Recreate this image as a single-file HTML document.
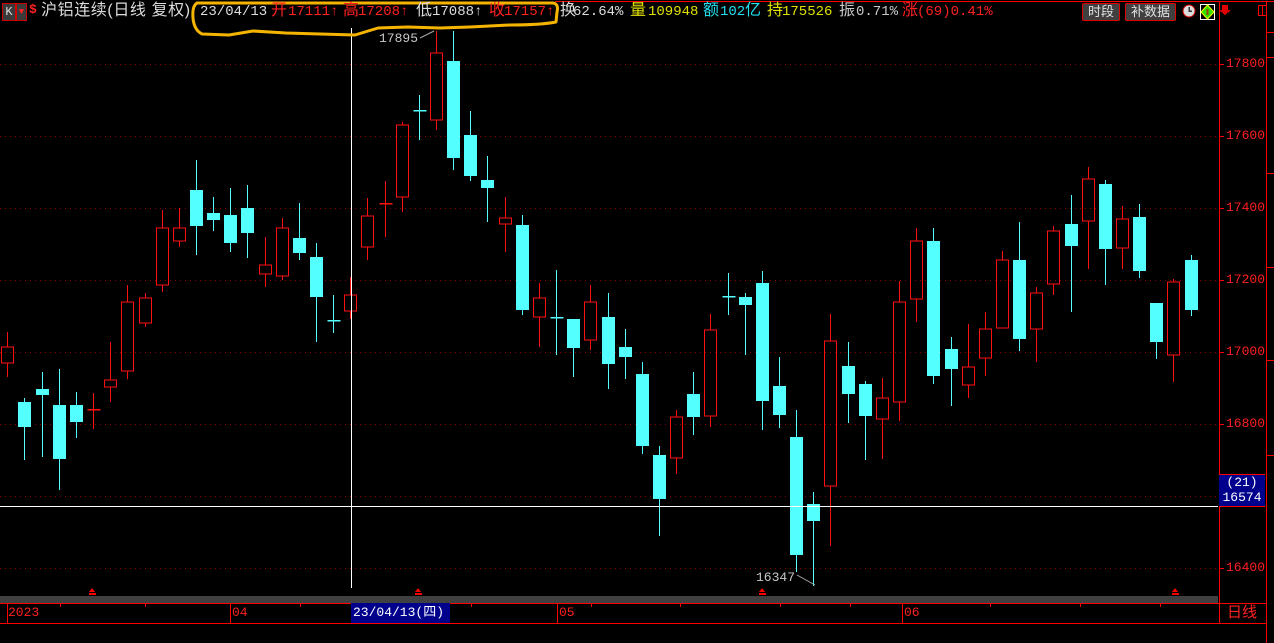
<!DOCTYPE html>
<html><head><meta charset="utf-8">
<style>
html,body{margin:0;padding:0;background:#000;width:1274px;height:643px;overflow:hidden}
body{position:relative;font-family:"Liberation Mono","Noto Sans CJK SC",monospace;font-size:14px}
.t{position:absolute;top:4px;line-height:16px;white-space:nowrap}
.cj{font-family:"Liberation Sans","Noto Sans CJK SC",sans-serif;font-size:16px}
.w{color:#dcdcdc}.r{color:#ff2020}.y{color:#e0e000}.c{color:#20e0f0}.g{color:#c8c8c8}
.btn{position:absolute;top:3px;height:16px;border:1px solid #e00000;background:#404040;color:#e0e0e0;font-family:"Liberation Sans","Noto Sans CJK SC",sans-serif;font-size:13px;line-height:16px;text-align:center;border-radius:2px}
.ax{position:absolute;left:1226px;color:#ff2020;font-size:13px;line-height:14px}
</style></head><body>
<svg id="s" width="1274" height="643" style="position:absolute;left:0;top:0" shape-rendering="crispEdges"></svg>

<div class="t" style="left:2px;top:3px;width:12px;height:16px;background:#3a3a3a;border:1px solid #c00;color:#ddd;font-size:12px;text-align:center;line-height:16px">K</div>
<div class="t r" style="left:16px;top:3px;width:9px;height:16px;background:#3a3a3a;border:1px solid #c00;font-size:9px;text-align:center">▼</div>
<div class="t r" style="left:29px;top:2px;font-weight:bold;font-size:13px">$</div>
<div class="t w cj" style="left:41px;top:3px;letter-spacing:0.6px">沪铝连续(日线 复权)</div>
<div class="t w" style="left:200px">23/04/13</div>
<div class="t r cj" style="left:271px;top:3px">开</div><div class="t r" style="left:288px">17111↑</div>
<div class="t r cj" style="left:343px;top:3px">高</div><div class="t r" style="left:358px">17208↑</div>
<div class="t w cj" style="left:416px;top:3px">低</div><div class="t w" style="left:432px">17088↑</div>
<div class="t r cj" style="left:489px;top:3px">收</div><div class="t r" style="left:504px">17157↑</div>
<div class="t w cj" style="left:560px;top:3px">换</div><div class="t w" style="left:573px">62.64%</div>
<div class="t y cj" style="left:630px;top:3px">量</div><div class="t y" style="left:648px">109948</div>
<div class="t c cj" style="left:703px;top:3px">额</div><div class="t c" style="left:720px">102</div><div class="t c cj" style="left:745px;top:3px">亿</div>
<div class="t y cj" style="left:767px;top:3px">持</div><div class="t y" style="left:782px">175526</div>
<div class="t g cj" style="left:839px;top:3px">振</div><div class="t g" style="left:856px">0.71%</div>
<div class="t r cj" style="left:902px;top:3px">涨</div><div class="t r" style="left:917px">(69)0.41%</div>
<div class="btn" style="left:1082px;width:36px">时段</div>
<div class="btn" style="left:1125px;width:49px">补数据</div>

<div class="ax" style="top:57px">17800</div>
<div class="ax" style="top:129px">17600</div>
<div class="ax" style="top:201px">17400</div>
<div class="ax" style="top:273px">17200</div>
<div class="ax" style="top:345px">17000</div>
<div class="ax" style="top:417px">16800</div>
<div class="ax" style="top:561px">16400</div>

<div style="position:absolute;left:1219px;top:474px;width:46px;height:31px;background:#00008c;border-top:1px solid #f00;border-bottom:1px solid #f00;color:#fff;font-size:13px;line-height:15px;text-align:center">(21)<br>16574</div>

<div class="t g" style="left:379px;top:31px;font-size:13px">17895</div>
<div class="t g" style="left:756px;top:570px;font-size:13px">16347</div>

<div style="position:absolute;left:351px;top:603px;width:97px;height:20px;background:#00008c;color:#fff;font-size:13px;line-height:20px;padding-left:2px">23/04/13(四)</div>
<div class="t r" style="left:8px;top:605px;font-size:13px">2023</div>
<div class="t r" style="left:232px;top:605px;font-size:13px">04</div>
<div class="t r" style="left:559px;top:605px;font-size:13px">05</div>
<div class="t r" style="left:904px;top:605px;font-size:13px">06</div>
<div class="t r cj" style="left:1227px;top:605px;font-size:15px">日线</div>

<script>
var s=document.getElementById('s'),h='';
function L(x1,y1,x2,y2,c,w,extra){h+='<line x1="'+x1+'" y1="'+y1+'" x2="'+x2+'" y2="'+y2+'" stroke="'+c+'" stroke-width="'+(w||1)+'" '+(extra||'')+'/>';}
[64,136,208,280,352,424,496,568].forEach(function(y){L(0,y+.5,1216,y+.5,'#8a0000',1,'stroke-dasharray="1,4"');L(1219,y+.5,1224,y+.5,'#f00');});
L(555,1.5,1274,1.5,'#f00',1);
L(1219.5,2,1219.5,624,'#f00');L(1266.5,2,1266.5,643,'#f00');
[32,57,173,267,360,455].forEach(function(y){L(1267,y+.5,1274,y+.5,'#f00');});
h+='<rect x="0" y="596" width="1218" height="7" fill="#404040"/>';
L(0,603.5,1266,603.5,'#f00');L(0,623.5,1266,623.5,'#f00');
[7,230,449,557,902].forEach(function(x){L(x+.5,603,x+.5,623,'#f00');});
[60,145,300,471,591,680,780,850,990,1080,1160].forEach(function(x){L(x+.5,603,x+.5,607,'#f00');});
[92,418,762,1175].forEach(function(x){h+='<path d="M'+(x-3)+' 592 L'+x+' 588 L'+(x+3)+' 592 Z M'+(x-3)+' 593 h7 v2 h-7z" fill="#f00"/>';});
var d=[[332,347,363,377,'r'],[398,402,427,460,'c'],[372,389,395,457,'c'],[369,405,459,490,'c'],[392,405,422,438,'c'],[393,409,409,429,'r'],[342,380,387,402,'r'],[285,302,371,379,'r'],[293,298,323,327,'r'],[210,228,285,292,'r'],
[208,228,241,247,'r'],[160,190,226,255,'c'],[197,213,220,231,'c'],[188,215,243,252,'c'],[185,208,233,258,'c'],[237,265,274,287,'r'],[218,228,276,280,'r'],[203,238,253,260,'c'],[243,257,297,342,'c'],[295,320,320,333,'c'],
[277,295,311,319,'r'],[198,216,247,260,'r'],[181,203,203,237,'r'],[122,125,197,212,'r'],[95,110,110,140,'c'],[31,53,120,130,'r'],[31,61,158,170,'c'],[111,135,176,181,'c'],[156,180,188,222,'c'],[197,218,224,252,'r'],
[215,225,310,315,'c'],[283,298,317,347,'r'],[270,317,317,355,'c'],[319,319,348,377,'c'],[285,302,340,350,'r'],[293,317,364,389,'c'],[329,347,357,379,'c'],[362,374,446,454,'c'],[446,455,499,536,'c'],[410,417,458,474,'r'],
[372,394,417,435,'c'],[314,330,416,427,'r'],[273,296,296,315,'c'],[293,297,305,355,'c'],[271,283,401,430,'c'],[357,386,415,428,'c'],[410,437,555,572,'c'],[492,504,521,586,'c'],[314,341,486,546,'r'],[342,366,394,423,'c'],
[381,384,416,460,'c'],[378,398,419,459,'r'],[281,302,402,421,'r'],[228,241,299,322,'r'],[228,241,376,384,'c'],[337,349,369,406,'c'],[324,367,385,398,'r'],[312,329,358,376,'r'],[251,260,328,328,'r'],[222,260,339,351,'c'],
[287,293,329,362,'r'],[226,231,284,295,'r'],[195,224,246,312,'c'],[167,179,221,269,'r'],[180,184,249,285,'c'],[206,219,248,269,'r'],[204,217,271,278,'c'],[303,303,342,359,'c'],[279,282,355,382,'r'],[255,260,310,316,'c']];
var R='#ff1010',C='#54ffff';
d.forEach(function(c,i){
 var cx=Math.round(7.3+i*17.15)+.5, t=c[4];
 if(t=='c'){
  L(cx,c[0],cx,c[3],C);
  if(c[2]-c[1]<2)L(cx-6,c[1]+.5,cx+7,c[1]+.5,C,1.5);
  else h+='<rect x="'+(cx-6.5)+'" y="'+c[1]+'" width="13" height="'+(c[2]-c[1])+'" fill="'+C+'"/>';
 }else{
  L(cx,c[0],cx,c[1],R);L(cx,c[2],cx,c[3],R);
  if(c[2]-c[1]<2)L(cx-6,c[1]+.5,cx+7,c[1]+.5,R,1.5);
  else h+='<rect x="'+(cx-6)+'" y="'+c[1]+'" width="12" height="'+(c[2]-c[1])+'" fill="none" stroke="'+R+'" stroke-width="1.3"/>';
 }
});
L(351.5,28,351.5,588,'#fff');L(0,506.5,1218,506.5,'#fff');
L(420,38,434,31,'#aaa',1,'shape-rendering="auto"');L(797,575,815,585,'#aaa',1,'shape-rendering="auto"');
h+='<path d="M197 3 L553 3 Q559 4 557 12 L556 22 Q540 25 510 25 L470 27 L440 28 L408 27 L378 28 L355 35 L320 34 L286 33 L253 31 L229 35 L202 34 Q194 30 193 18 Q192 6 197 3 Z" fill="none" stroke="#f5b400" stroke-width="3" stroke-linejoin="round" shape-rendering="auto"/>';
h+='<circle cx="1189" cy="11" r="6" fill="#ddd" stroke="#c00" stroke-width="1" shape-rendering="auto"/><path d="M1189 7 V11 H1192" stroke="#333" stroke-width="1.5" fill="none"/>';
h+='<rect x="1200.5" y="4.5" width="14" height="15" fill="#000" stroke="#fff"/><path d="M1207.5 5 L1214 12 L1207.5 19 L1201 12 Z" fill="#30e000" stroke="#ff0" shape-rendering="auto"/><path d="M1207.5 9 v6" stroke="#a04000" stroke-width="2"/>';
h+='<path d="M1222 5 h6 v5 h3 l-6 5 l-6 -5 h3 z" fill="#e00000"/><rect x="1258.5" y="5.5" width="8" height="10" fill="none" stroke="#f00"/><line x1="1262.5" y1="5" x2="1262.5" y2="16" stroke="#f00"/>';
s.innerHTML=h;
</script>
</body></html>
